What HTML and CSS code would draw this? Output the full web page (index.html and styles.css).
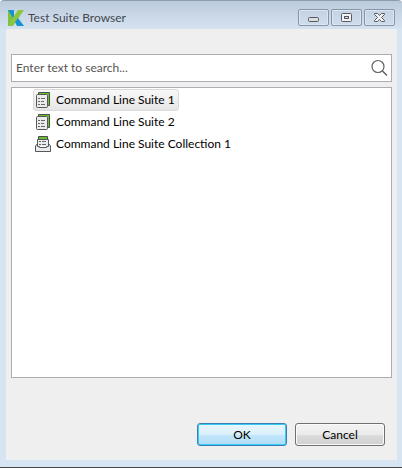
FILE: index.html
```html
<!DOCTYPE html>
<html lang="en">
<head>
<meta charset="utf-8">
<title>Test Suite Browser</title>
<link rel="stylesheet" href="styles.css">
</head>
<body>
<main class="window">
  <header class="titlebar">
    <svg class="logo" width="16" height="16" viewBox="0 0 16 16" aria-hidden="true">
      <path d="M0 0H6V7L0 16Z" fill="#1593d3"/>
      <path d="M0 0L5 8L0 15Z" fill="#7fc241"/>
      <path d="M10 0H16L5 16H0V15Z" fill="#8cc63f"/>
      <path d="M10 8L16 16H9L7 12Z" fill="#1593d3"/>
    </svg>
    <h1 class="title">Test Suite Browser</h1>
    <div class="controls">
      <button class="control" type="button" aria-label="Minimize">
        <svg width="21" height="13" viewBox="0 0 21 13"><rect x="5.500" y="6.500" width="10" height="4" rx="1" fill="#dcdcd8" stroke="#555a66"/></svg>
      </button>
      <button class="control" type="button" aria-label="Maximize">
        <svg width="21" height="13" viewBox="0 0 21 13"><rect x="5.500" y="2.500" width="10" height="8" rx="1" fill="#f2f2f0" stroke="#555a66"/><rect x="8.500" y="5.500" width="4" height="2" fill="#c6d4e4" stroke="#555a66"/></svg>
      </button>
      <button class="control" type="button" aria-label="Close">
        <svg width="21" height="13" viewBox="0 0 21 13"><path d="M5.500 2.500H8.500L10.500 4.500L12.500 2.500H15.500V3.500L12.500 6.500L15.500 9.500V10.500H12.500L10.500 8.500L8.500 10.500H5.500V9.500L8.500 6.500L5.500 3.500Z" fill="#f2f2f0" stroke="#555a66"/></svg>
      </button>
    </div>
  </header>
  <section class="content">
    <div class="search">
      <input class="search-input" type="text" placeholder="Enter text to search..." aria-label="Search">
      <svg class="search-icon" width="18" height="18" viewBox="0 0 18 18" fill="none" stroke="#606060" aria-hidden="true"><circle cx="8" cy="7.500" r="6" stroke-width="1.200"/><path d="M12.500 12L17 16.500" stroke-width="1.500"/></svg>
    </div>
    <ul class="list">
      <li class="item item-selected">
        <svg width="18" height="18" viewBox="0 0 18 18" aria-hidden="true"><path d="M3.500 3V1.500H14.500V14.500H12" fill="#6cc02c" stroke="#4a4d4f"/><path d="M4 2.500H13.500V14" fill="none" stroke="#6cc02c"/><rect x="1.500" y="3.500" width="11" height="13" rx="1" fill="#ebebeb" stroke="#55585a"/><path d="M3 7.500H5M3 10.500H5M3 13.500H5M6 7.500H10M6 10.500H9M6 13.500H10" stroke="#66696b"/></svg>
        <span>Command Line Suite 1</span>
      </li>
      <li class="item">
        <svg width="18" height="18" viewBox="0 0 18 18" aria-hidden="true"><path d="M3.500 3V1.500H14.500V14.500H12" fill="#6cc02c" stroke="#4a4d4f"/><path d="M4 2.500H13.500V14" fill="none" stroke="#6cc02c"/><rect x="1.500" y="3.500" width="11" height="13" rx="1" fill="#ebebeb" stroke="#55585a"/><path d="M3 7.500H5M3 10.500H5M3 13.500H5M6 7.500H10M6 10.500H9M6 13.500H10" stroke="#66696b"/></svg>
        <span>Command Line Suite 2</span>
      </li>
      <li class="item">
        <svg width="18" height="18" viewBox="0 0 18 18" aria-hidden="true"><path d="M3.500 4V1.500H12.500V4" fill="#6cc02c" stroke="#4a4d4f"/><path d="M4 2.500H12" stroke="#6cc02c"/><path d="M2.500 11V4.500H13.500V11" fill="#ebebeb" stroke="#55585a"/><path d="M4 6.500H6M4 9.500H6M7 6.500H11M7 9.500H11" stroke="#66696b"/><path d="M2.500 8.500L0.500 11V16.500H15.500V11L13.500 8.500V11.500H11.500V12.500H4.500V11.500H2.500Z" fill="#ebebeb" stroke="#55585a"/></svg>
        <span>Command Line Suite Collection 1</span>
      </li>
    </ul>
    <footer class="actions">
      <button class="button button-default" type="button">OK</button>
      <button class="button" type="button">Cancel</button>
    </footer>
  </section>
</main>
</body>
</html>
```
FILE: styles.css
```css
* {
  box-sizing: border-box;
}

body {
  margin: 0;
  font: 12px/16px Lato, "Open Sans", sans-serif;
  color: #000;
}

.window {
  display: flex;
  flex-direction: column;
  min-height: 100vh;
  padding: 0 5px 7px 6px;
  border-top: 1px solid #8f9cab;
  border-bottom: 1px solid #45474a;
  border-radius: 4px 4px 0 0;
  background: linear-gradient(#bccbdc, #d7e4f2 30px);
}

.titlebar {
  display: flex;
  align-items: center;
  height: 28px;
  padding: 5px 2px 0;
}

.title {
  flex: 1;
  margin: 0 0 0 4px;
  font-size: 12px;
  font-weight: 400;
  color: #44484f;
}

.controls {
  display: flex;
  gap: 2px;
}

.control {
  display: flex;
  align-items: center;
  justify-content: center;
  width: 31px;
  height: 17px;
  padding: 0;
  border: 1px solid #8795ab;
  border-radius: 2px;
  background: linear-gradient(#c4d2e2, #cfddeb);
  box-shadow: inset 0 0 0 1px #dbe6f1;
}

.content {
  flex: 1;
  display: flex;
  flex-direction: column;
  padding: 25px 5px 14px;
  background: #efefef;
}

.search {
  display: flex;
  align-items: center;
  height: 28px;
  padding: 0 3px 0 4px;
  border: 1px solid #abadb3;
  background: #fff;
}

.search-input {
  flex: 1;
  min-width: 0;
  padding: 0;
  border: 0;
  outline: 0;
  background: none;
  font: inherit;
}

.search-input::placeholder {
  color: #555;
  opacity: 1;
}

.list {
  flex: 1;
  margin: 5px 0 45px;
  padding: 1px 0 0 21px;
  border: 1px solid #abadb3;
  background: #fff;
  list-style: none;
}

.item {
  display: flex;
  align-items: center;
  gap: 3px;
  width: fit-content;
  height: 22px;
  padding: 0 3px 0 1px;
  border: 1px solid transparent;
  border-radius: 3px;
}

.item-selected {
  border-color: #d9d9d9;
  background: linear-gradient(#f8f8f8, #e6e6e6);
}

.actions {
  display: flex;
  justify-content: flex-end;
  gap: 8px;
  padding-right: 7px;
}

.button {
  width: 90px;
  height: 23px;
  padding: 0;
  border: 1px solid #707070;
  border-radius: 3px;
  background: linear-gradient(#f3f3f3, #ebebeb 50%, #dddddd 50%, #cfcfcf);
  box-shadow: inset 0 0 0 1px #fafafa;
  font: inherit;
  color: #000;
}

.button-default {
  border-color: #3c7fb1;
  background: linear-gradient(#eaf6fd, #d9f0fc 50%, #c3e7fa 50%, #b0dcf5);
  box-shadow: inset 0 0 0 1px #35cdf7;
}
```
